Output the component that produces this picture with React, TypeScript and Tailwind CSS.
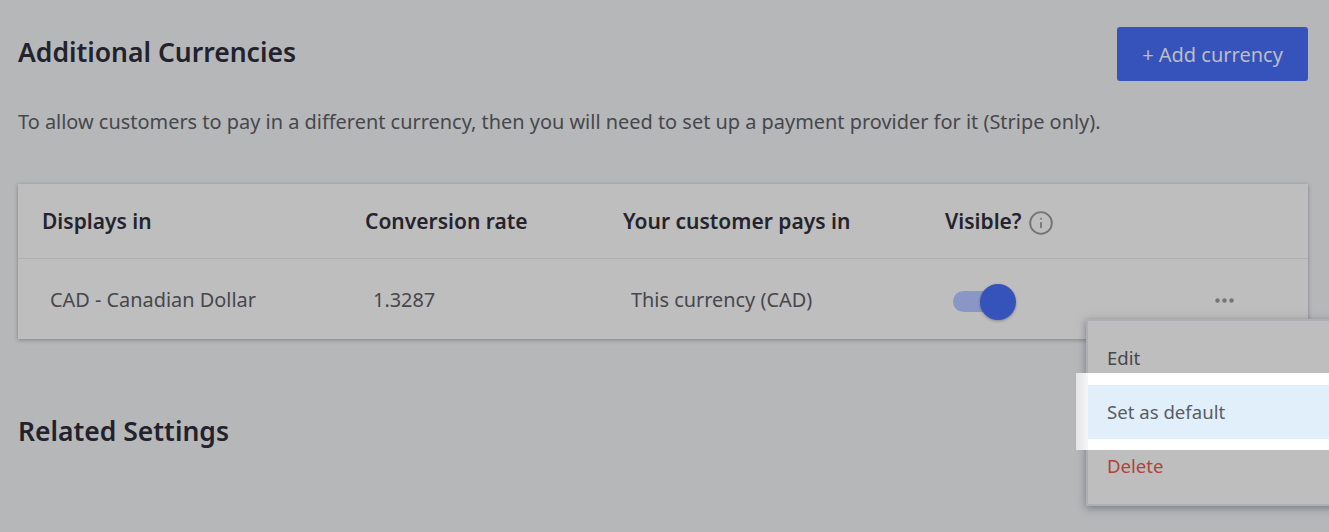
import { Info } from 'lucide-react'

const font = { fontFamily: '"Noto Sans", sans-serif' }

export default function App() {
  return (
    <div style={font} className="relative h-[532px] w-[1329px] overflow-hidden bg-[#b6b7b9] pt-[27px] pl-[18px] pr-[21px]">
      {/* Title row */}
      <div className="flex items-start justify-between">
        <h2 className="text-[26.5px] leading-[50px] font-semibold text-[#23222c]">Additional Currencies</h2>
        <button className="flex h-[54px] w-[191px] items-center justify-center rounded-[3px] bg-[#3653bb] pt-[2px] text-[20px] text-[#bcbdc5]">
          + Add currency
        </button>
      </div>

      <p className="mt-[27px] text-[19.93px] leading-[28px] text-[#47474d]">
        To allow customers to pay in a different currency, then you will need to set up a payment provider for it (Stripe only).
      </p>

      {/* Currency table */}
      <div className="mt-[48px] bg-[#bebebe] shadow-[0_1px_4px_rgba(60,60,70,0.45)]">
        <div className="grid h-[75px] grid-cols-[323px_258px_322px_1fr] items-center border-b border-[#aeaeb5] pt-[2px] pl-[24px] text-[21px] font-semibold text-[#25242c]">
          <div>Displays in</div>
          <div>Conversion rate</div>
          <div>Your customer pays in</div>
          <div className="flex items-center gap-[6px]">
            Visible?
            <Info size={26} strokeWidth={1.75} className="mt-[2px] text-[#757575]" />
          </div>
        </div>
        <div className="grid h-[80px] grid-cols-[323px_258px_322px_1fr] items-center pt-[2px] pl-[32px] text-[19.9px] text-[#47474d]">
          <div>CAD - Canadian Dollar</div>
          <div>1.3287</div>
          <div>This currency (CAD)</div>
          <div className="flex items-center justify-between pr-[74px]">
            <div className="mt-[2px] flex h-[36px] w-[63px] items-center">
              <div className="relative h-[21px] w-[52px] rounded-full bg-[#8a97c6]">
                <div className="absolute top-[-7px] left-[27px] h-[36px] w-[36px] rounded-full bg-[#3653bb] shadow-[0_1px_3px_rgba(0,0,0,0.3)]" />
              </div>
            </div>
            <svg width="19" height="5" viewBox="0 0 19 5" className="text-[#757575]">
              <circle cx="2.5" cy="2.5" r="2.2" fill="currentColor" />
              <circle cx="9.5" cy="2.5" r="2.2" fill="currentColor" />
              <circle cx="16.5" cy="2.5" r="2.2" fill="currentColor" />
            </svg>
          </div>
        </div>
      </div>

      <h2 className="mt-[67px] text-[26.5px] leading-[50px] font-semibold text-[#23222c]">Related Settings</h2>

      {/* Open row menu */}
      <div className="absolute top-[319px] left-[1086px] h-[187px] w-[300px] border-2 border-r-0 border-[#aeaeb5] bg-[#bebebe] text-[18.6px] shadow-[0_2px_8px_rgba(60,60,70,0.5)]">
        <div className="flex h-[52px] items-end pb-[1px] pl-[19px] leading-[28px] text-[#47474d]">Edit</div>
        <div className="relative">
          <div className="absolute top-[0px] left-[-12px] h-[77px] w-[12px] bg-gradient-to-r from-[#e4e4e6] to-[#f6f6f7]" />
          <div className="h-[77px] bg-white py-[12px]">
            <div className="flex h-[54px] items-center bg-[#e1effb] pl-[19px] text-[#5a5c63]">Set as default</div>
          </div>
        </div>
        <div className="flex h-[31px] items-center pl-[19px] text-[#b0433a]">Delete</div>
      </div>
    </div>
  )
}
